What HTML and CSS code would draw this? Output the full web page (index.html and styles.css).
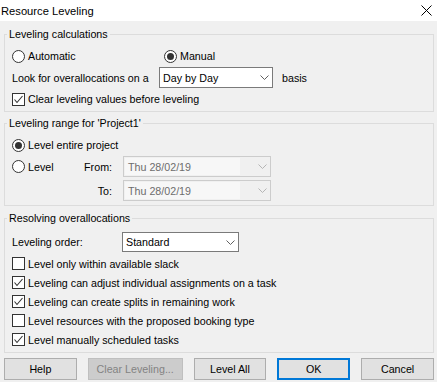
FILE: index.html
```html
<!DOCTYPE html>
<html lang="en">

<head>
  <meta charset="UTF-8">
  <meta name="viewport" content="width=device-width, initial-scale=1.0">
  <title>Resource Leveling</title>
  <link rel="stylesheet" href="styles.css">
</head>

<body>
  <div class="window">
    <div class="titlebar">
      <span class="title">Resource Leveling</span>
      <svg class="close" width="11" height="11" viewBox="0 0 11 11">
        <path d="M0.5 0.5L10.5 10.5M10.5 0.5L0.5 10.5" stroke="#000" stroke-width="1" fill="none" />
      </svg>
    </div>

    <div class="content">
      <fieldset class="group group-calc">
        <legend>Leveling calculations</legend>
        <div class="row mode-row">
          <label class="option option-auto"><span class="radio"></span>Automatic</label>
          <label class="option"><span class="radio checked"></span>Manual</label>
        </div>
        <div class="row basis-row">
          <span class="look-label">Look for overallocations on a</span>
          <div class="select select-basis">
            <span class="value">Day by Day</span>
            <svg class="chevron" width="9" height="5" viewBox="0 0 9 5"><path d="M0.5 0.5L4.5 4.5L8.5 0.5" /></svg>
          </div>
          <span class="basis">basis</span>
        </div>
        <div class="row clear-row">
          <label class="option">
            <span class="check"><svg width="13" height="13" viewBox="0 0 13 13"><path d="M2.5 6.5L5 9.5L10.5 3" /></svg></span>
            Clear leveling values before leveling
          </label>
        </div>
      </fieldset>

      <fieldset class="group group-range">
        <legend>Leveling range for 'Project1'</legend>
        <div class="row entire-row">
          <label class="option"><span class="radio checked"></span>Level entire project</label>
        </div>
        <div class="row range-row from-row">
          <div class="range-lead">
            <label class="option"><span class="radio"></span>Level</label>
            <span>From:</span>
          </div>
          <div class="select select-date disabled">
            <span class="value">Thu 28/02/19</span>
            <svg class="chevron" width="9" height="5" viewBox="0 0 9 5"><path d="M0.5 0.5L4.5 4.5L8.5 0.5" /></svg>
          </div>
        </div>
        <div class="row range-row to-row">
          <div class="range-lead">
            <span></span>
            <span>To:</span>
          </div>
          <div class="select select-date disabled">
            <span class="value">Thu 28/02/19</span>
            <svg class="chevron" width="9" height="5" viewBox="0 0 9 5"><path d="M0.5 0.5L4.5 4.5L8.5 0.5" /></svg>
          </div>
        </div>
      </fieldset>

      <fieldset class="group group-resolve">
        <legend>Resolving overallocations</legend>
        <div class="row order-row">
          <span class="order-label">Leveling order:</span>
          <div class="select select-order">
            <span class="value">Standard</span>
            <svg class="chevron" width="9" height="5" viewBox="0 0 9 5"><path d="M0.5 0.5L4.5 4.5L8.5 0.5" /></svg>
          </div>
        </div>
        <div class="row check-row first">
          <label class="option"><span class="check"></span>Level only within available slack</label>
        </div>
        <div class="row check-row">
          <label class="option">
            <span class="check"><svg width="13" height="13" viewBox="0 0 13 13"><path d="M2.5 6.5L5 9.5L10.5 3" /></svg></span>
            Leveling can adjust individual assignments on a task
          </label>
        </div>
        <div class="row check-row">
          <label class="option">
            <span class="check"><svg width="13" height="13" viewBox="0 0 13 13"><path d="M2.5 6.5L5 9.5L10.5 3" /></svg></span>
            Leveling can create splits in remaining work
          </label>
        </div>
        <div class="row check-row">
          <label class="option"><span class="check"></span>Level resources with the proposed booking type</label>
        </div>
        <div class="row check-row">
          <label class="option">
            <span class="check"><svg width="13" height="13" viewBox="0 0 13 13"><path d="M2.5 6.5L5 9.5L10.5 3" /></svg></span>
            Level manually scheduled tasks
          </label>
        </div>
      </fieldset>

      <div class="buttons">
        <button class="btn">Help</button>
        <button class="btn btn-wide" disabled>Clear Leveling...</button>
        <button class="btn">Level All</button>
        <button class="btn btn-default">OK</button>
        <button class="btn">Cancel</button>
      </div>
    </div>
  </div>
</body>

</html>
```

FILE: styles.css
```css
body {
  margin: 0;
  background-color: #f0f0f0;
  font-family: "Liberation Sans", Arial, sans-serif;
  font-size: 10.7px;
  color: #000;
}
.window {
  width: 437px;
  height: 382px;
  overflow: hidden;
}
.titlebar {
  height: 21px;
  background-color: #fff;
  display: flex;
  align-items: center;
  justify-content: space-between;
  padding: 0 5px 0 1px;
}
.title {
  font-size: 11.2px;
}
.content {
  padding: 5px 3px 0 4px;
}
.group {
  border: 1px solid #dcdcdc;
  margin: 0;
  padding: 0 6px 1px 7px;
  min-width: 0;
}
.group legend {
  padding: 0 2px;
  margin-left: -5px;
  line-height: 16px;
}
.group-range {
  margin-top: 3px;
  padding-bottom: 4px;
}
.group-resolve {
  margin-top: 4px;
  padding-bottom: 3px;
}
.row {
  display: flex;
  align-items: center;
}
.option {
  display: flex;
  align-items: center;
  gap: 3px;
}
.radio {
  width: 13px;
  height: 13px;
  box-sizing: border-box;
  border: 1px solid #333;
  border-radius: 50%;
  background-color: #fff;
  display: flex;
  align-items: center;
  justify-content: center;
}
.radio.checked::after {
  content: "";
  width: 7px;
  height: 7px;
  border-radius: 50%;
  background-color: #333;
}
.check {
  width: 13px;
  height: 13px;
  box-sizing: border-box;
  border: 1px solid #333;
  background-color: #fff;
  position: relative;
}
.check svg {
  position: absolute;
  left: -1px;
  top: -1px;
}
.check path {
  fill: none;
  stroke: #333;
  stroke-width: 1.1;
}
.select {
  box-sizing: border-box;
  display: flex;
  align-items: center;
  justify-content: space-between;
  border: 1px solid #7a7a7a;
  background-color: #fff;
  padding: 0 3px 0 3px;
}
.chevron path {
  fill: none;
  stroke: #606060;
  stroke-width: 1;
}

/* leveling calculations */
.mode-row {
  height: 20px;
  margin-top: 4px;
}
.option-auto {
  width: 152px;
}
.basis-row {
  height: 21px;
  margin-top: 1px;
}
.look-label {
  width: 147px;
}
.select-basis {
  width: 114px;
  height: 21px;
}
.basis {
  margin-left: 9px;
}
.clear-row {
  height: 22px;
}

/* leveling range */
.entire-row {
  height: 20px;
  margin-top: 4px;
}
.range-row {
  height: 21px;
}
.from-row {
  margin-top: 1px;
}
.to-row {
  margin-top: 3px;
}
.range-lead {
  width: 100px;
  display: flex;
  align-items: center;
  justify-content: space-between;
}
.select-date {
  width: 148px;
  height: 21px;
  margin-left: 11px;
}
.select.disabled {
  border-color: #cccccc;
  background-color: #f0f0f0;
  color: #6d6d6d;
  padding-left: 1px;
}
.select.disabled .value {
  flex: 1;
  align-self: stretch;
  display: flex;
  align-items: center;
  padding-left: 3px;
  margin: 1px 18px 1px 0;
  background-color: #f7f7f7;
}
.select.disabled .chevron path {
  stroke: #b5b5b5;
}

/* resolving overallocations */
.order-row {
  height: 20px;
  margin-top: 6px;
}
.order-label {
  width: 110px;
}
.select-order {
  width: 117px;
  height: 20px;
}
.check-row {
  height: 19px;
}
.check-row.first {
  margin-top: 2px;
}

/* buttons */
.buttons {
  display: flex;
  gap: 11px;
  margin-top: 5px;
}
.btn {
  width: 73px;
  height: 22px;
  box-sizing: border-box;
  border: 1px solid #adadad;
  background-color: #e1e1e1;
  font-family: inherit;
  font-size: 10.7px;
  color: #000;
  padding: 0;
}
.btn-wide {
  width: 95px;
}
.btn-default {
  border: 2px solid #0078d7;
}
.btn:disabled {
  background-color: #cccccc;
  border-color: #bfbfbf;
  color: #838383;
}
```
